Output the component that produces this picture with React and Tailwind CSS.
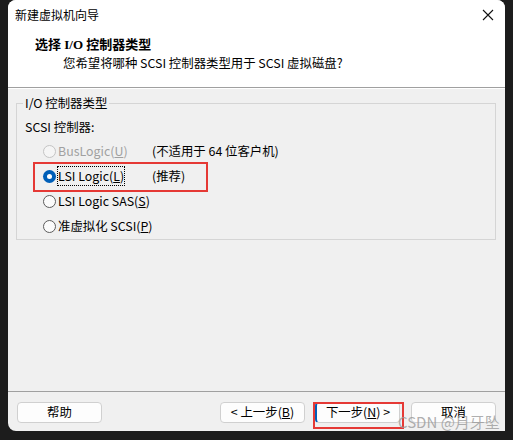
import React from "react";

const font = { fontFamily: '"Noto Sans CJK SC", "Noto Sans", sans-serif' };

function Radio({ state }) {
  if (state === "checked") {
    return (
      <span className="w-[13px] h-[13px] rounded-full bg-[#005fb8] flex items-center justify-center shrink-0">
        <span className="w-[5px] h-[5px] rounded-full bg-white" />
      </span>
    );
  }
  if (state === "disabled") {
    return <span className="w-[13px] h-[13px] rounded-full border border-[#c4c4c4] bg-[#f5f5f5] shrink-0" />;
  }
  return <span className="w-[13px] h-[13px] rounded-full border border-[#5c5c5c] bg-[#fbfbfb] shrink-0" />;
}

function Row({ state, label, note, focus }) {
  return (
    <div className="h-[25px] flex items-center pl-[26px] whitespace-nowrap">
      <Radio state={state} />
      <span className={`ml-[2px] min-w-[94px] ${state === "disabled" ? "text-[#a0a0a0]" : "text-black"}`}>
        <span className={focus ? "outline outline-1 outline-dotted outline-black" : ""}>{label}</span>
      </span>
      {note && <span className="text-black">{note}</span>}
    </div>
  );
}

function Btn({ children, focus }) {
  return (
    <div
      className={`w-[85px] h-[21px] rounded-[4px] border border-[#d0d0d0] bg-[#fdfdfd] flex items-center justify-center text-black whitespace-nowrap ${
        focus ? "border-l-2 border-l-[#005fb8]" : ""
      }`}
    >
      {children}
    </div>
  );
}

export default function App() {
  return (
    <div className="w-[513px] h-[440px] bg-[#1c1c1c] px-[8px] text-[12.4px]" style={font}>
      <div className="relative w-[497px] h-[431px] bg-[#f0f0f0] rounded-t-[8px] rounded-bl-[8px] overflow-hidden flex flex-col">
        {/* title bar + header */}
        <div className="bg-white h-[88px] border-b border-[#a0a0a0] flex flex-col">
          <div className="h-[30px] flex items-center justify-between pl-[7px] pr-[11px]">
            <span className="text-black text-[12px]">新建虚拟机向导</span>
            <svg width="12" height="12" viewBox="0 0 12 12">
              <path d="M1 1 L11 11 M11 1 L1 11" stroke="#111" strokeWidth="1.1" />
            </svg>
          </div>
          <div
            className="pl-[27px] mt-[6px] font-bold text-[13px] text-black leading-[18px]"
            style={{ fontFamily: '"Liberation Serif", "Noto Sans CJK SC", serif' }}
          >
            选择 I/O 控制器类型
          </div>
          <div className="pl-[55px] leading-[18px] text-black">您希望将哪种 SCSI 控制器类型用于 SCSI 虚拟磁盘?</div>
        </div>
        <div className="h-px bg-white" />

        {/* group box */}
        <div className="relative mt-[14px] ml-[8px] w-[480px] h-[137px] border border-[#d5d5d5]">
          <span className="absolute -top-[9px] left-[6px] px-[2px] bg-[#f0f0f0] leading-[16px] text-black">I/O 控制器类型</span>
          <div className="pt-[15px] pl-[8px] leading-[16px] text-black">SCSI 控制器:</div>
          <div className="mt-[4px]">
            <Row state="disabled" label={<>BusLogic(<u>U</u>)</>} note="(不适用于 64 位客户机)" />
            <Row state="checked" label={<>LSI Logic(<u>L</u>)</>} note="(推荐)" focus />
            <Row state="none" label={<>LSI Logic SAS(<u>S</u>)</>} />
            <Row state="none" label={<>准虚拟化 SCSI(<u>P</u>)</>} />
          </div>
        </div>

        <div className="flex-1" />
        <div className="h-px bg-[#a0a0a0]" />
        <div className="h-[39px] flex items-start pt-[10px] pl-[9px] pr-[9px]">
          <Btn>帮助</Btn>
          <div className="flex-1" />
          <Btn>&lt; 上一步(<u>B</u>)</Btn>
          <div className="w-[10px]" />
          <Btn focus>下一步(<u>N</u>) &gt;</Btn>
          <div className="w-[11px]" />
          <Btn>取消</Btn>
        </div>

        {/* annotations */}
        <div className="absolute left-[25px] top-[162px] w-[175px] h-[30px] border-2 border-[#e53935]" />
        <div className="absolute left-[305px] top-[402px] w-[91px] h-[27px] border-2 border-[#e53935]" />
        <div className="absolute left-[390px] top-[414px] text-[15px] text-[#9a9a9a]/80 leading-[16px] whitespace-nowrap">
          CSDN @月牙坠
        </div>
      </div>
    </div>
  );
}
